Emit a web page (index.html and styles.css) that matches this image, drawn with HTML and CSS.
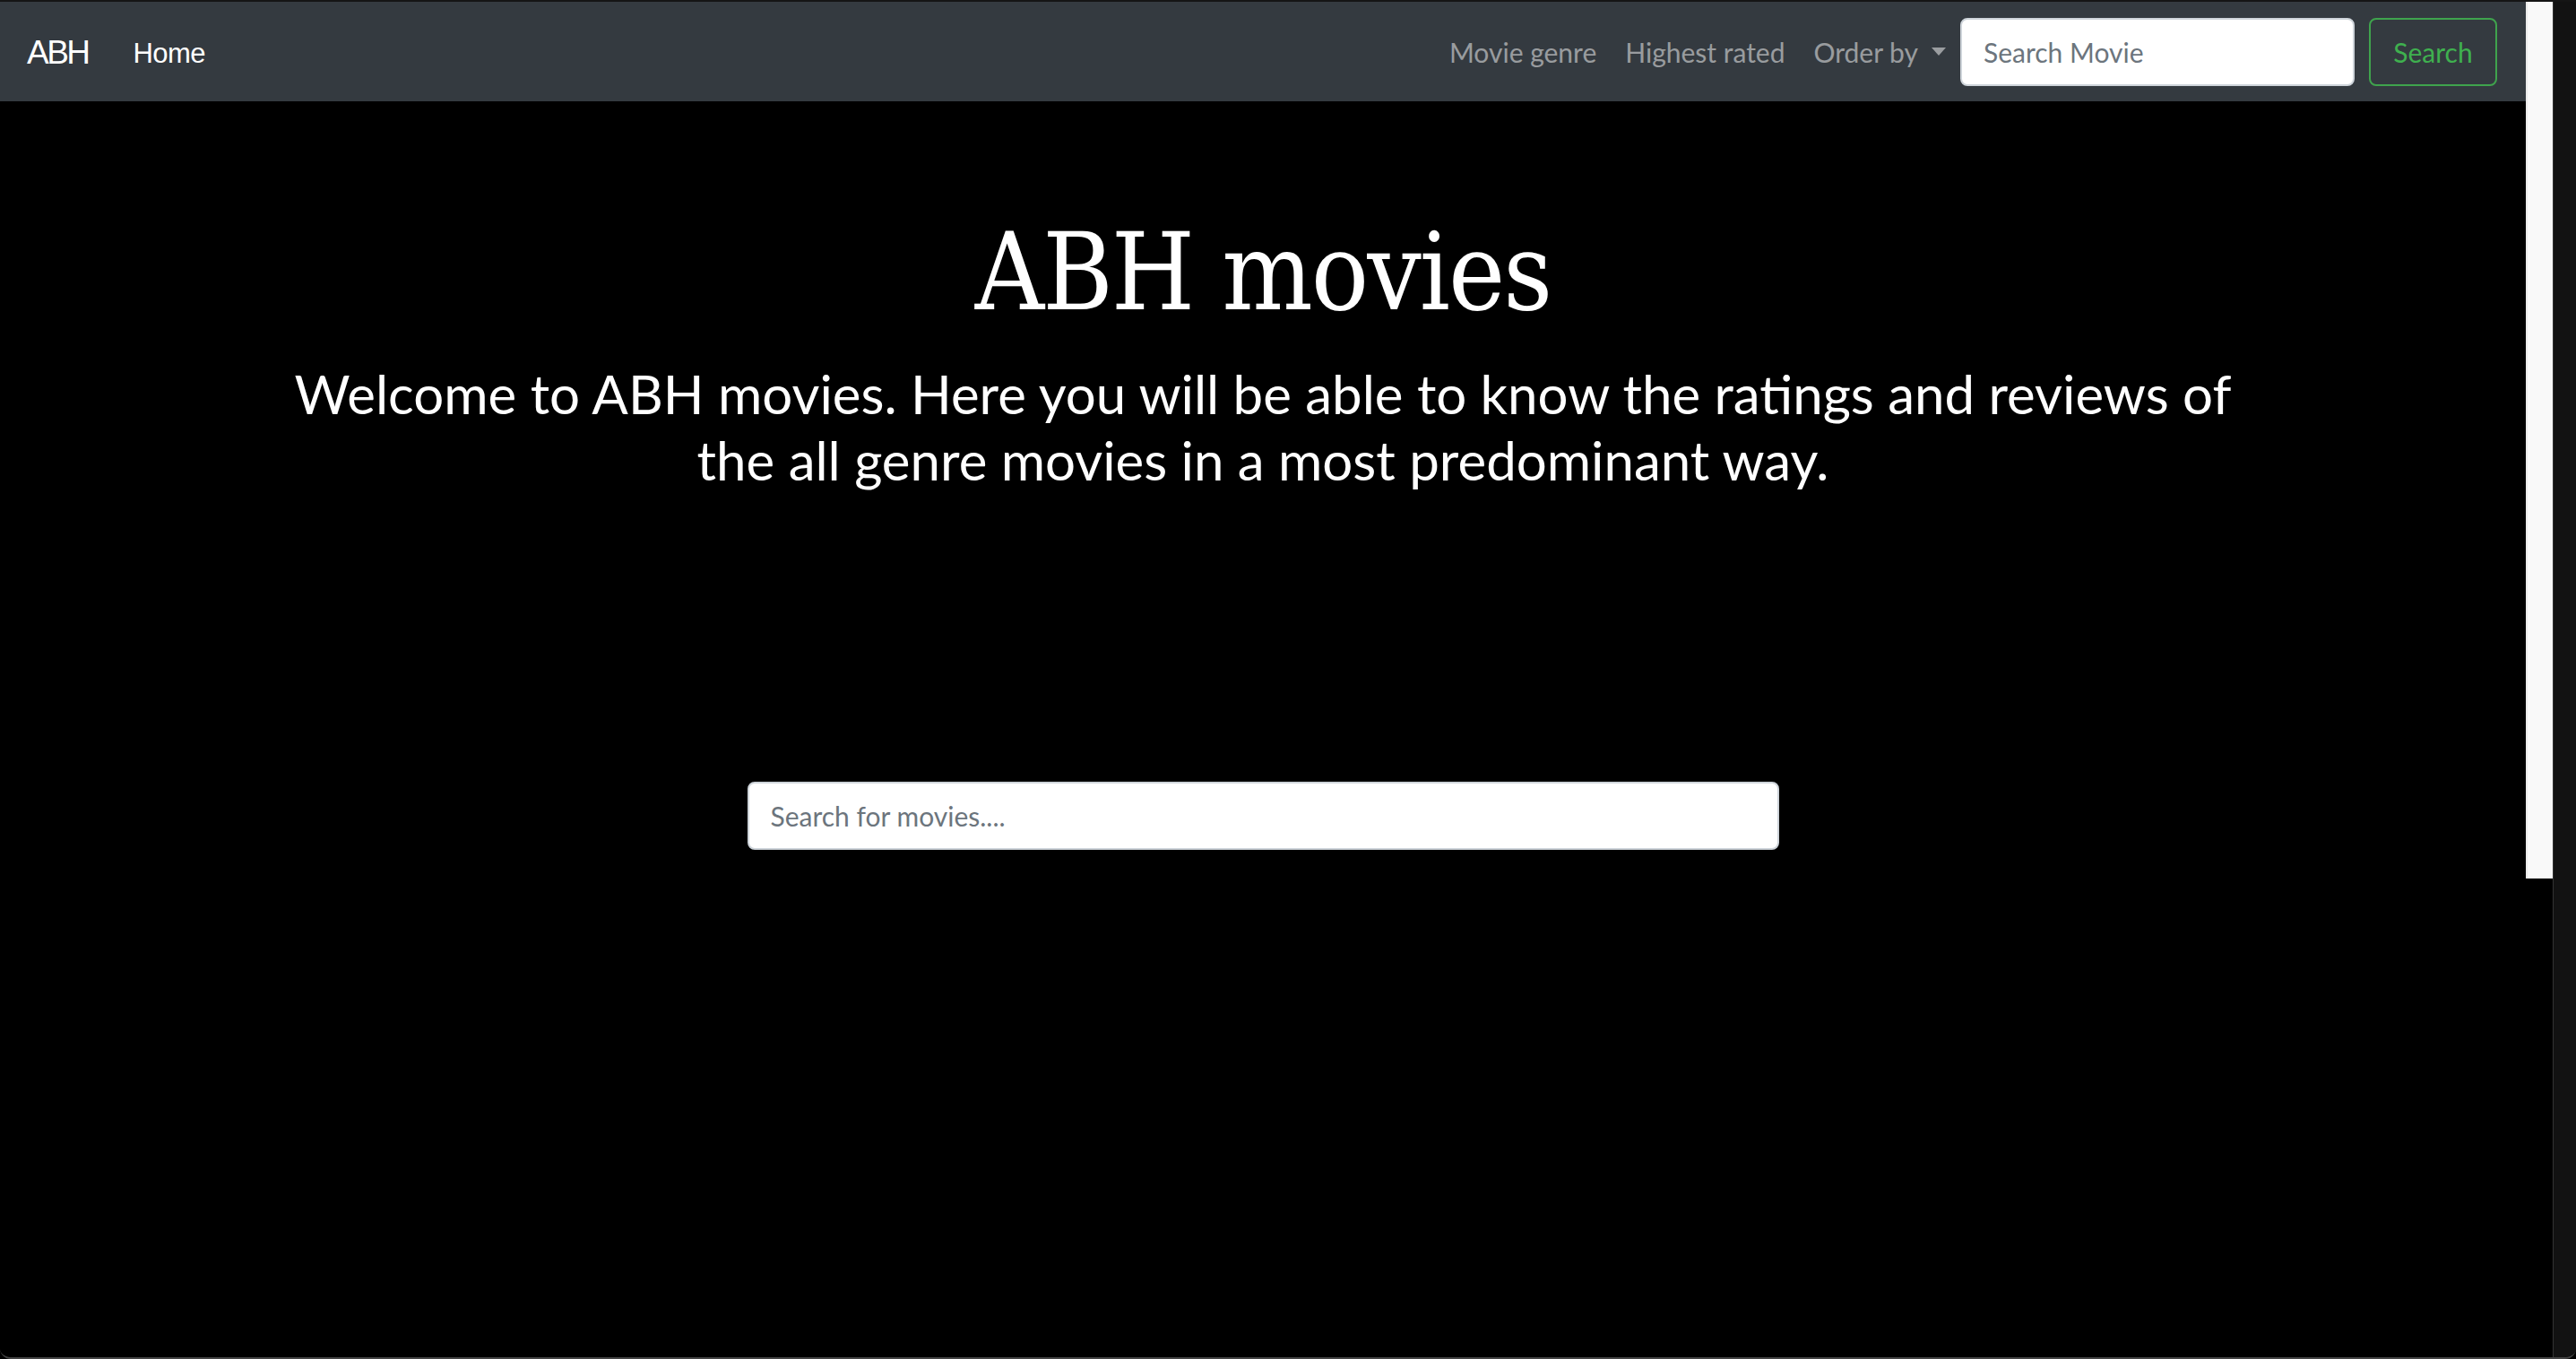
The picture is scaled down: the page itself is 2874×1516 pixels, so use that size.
FILE: index.html
```html
<!DOCTYPE html>
<html lang="en">
<head>
<meta charset="utf-8">
<title>ABH movies</title>
<link rel="stylesheet" href="styles.css">
</head>
<body>
<div class="window">
  <div class="page">
    <nav class="navbar">
      <a class="brand" href="#">ABH</a>
      <a class="nav-link active" href="#">Home</a>
      <div class="nav-right">
        <a class="nav-link" href="#">Movie genre</a>
        <a class="nav-link" href="#">Highest rated</a>
        <a class="nav-link dropdown" href="#">Order by<span class="caret"></span></a>
        <form class="nav-form">
          <input class="nav-input" type="search" placeholder="Search Movie">
          <button class="btn-search" type="button">Search</button>
        </form>
      </div>
    </nav>
    <main class="hero">
      <h1 class="title">ABH movies</h1>
      <p class="lead">Welcome to ABH movies. Here you will be able to know the ratings and reviews of<br>the all genre movies in a most predominant way.</p>
      <input class="main-search" type="text" placeholder="Search for movies....">
    </main>
  </div>
  <div class="scrollbar"><div class="thumb"></div></div>
  <div class="edge"></div>
</div>
</body>
</html>
```

FILE: styles.css
```css
html, body {
  margin: 0;
  padding: 0;
  background: #000;
  height: 1516px;
  overflow: hidden;
}

.window {
  display: flex;
  height: 1516px;
  border-top: 2px solid #151515;
  border-bottom: 2px solid #444;
  border-radius: 0 0 12px 12px;
  overflow: hidden;
  box-sizing: border-box;
}

.page {
  flex: 1;
  display: flex;
  flex-direction: column;
  background: #000;
}

.navbar {
  height: 111px;
  flex: none;
  box-sizing: border-box;
  background: #343a40;
  display: flex;
  align-items: center;
  padding: 0 32px 0 30px;
}

.brand {
  font-family: "Liberation Sans", Arial, sans-serif;
  font-size: 37px;
  letter-spacing: -2.5px;
  color: #fff;
  text-decoration: none;
  margin-right: 34px;
  line-height: 1;
  padding-top: 2px;
}

.nav-link {
  font-family: "Lato", sans-serif;
  font-size: 30px;
  color: rgba(255, 255, 255, 0.5);
  text-decoration: none;
  padding: 0 16px;
  line-height: 1;
  display: flex;
  align-items: center;
}

.nav-link.active {
  font-family: "Liberation Sans", Arial, sans-serif;
  font-size: 31px;
  letter-spacing: -0.6px;
  color: #fff;
  padding-top: 3px;
}

.nav-right {
  margin-left: auto;
  display: flex;
  align-items: center;
}

.caret {
  display: inline-block;
  width: 0;
  height: 0;
  margin-left: 15px;
  border-left: 8.5px solid transparent;
  border-right: 8.5px solid transparent;
  border-top: 9.5px solid rgba(255, 255, 255, 0.5);
}

.nav-form {
  display: flex;
  align-items: center;
}

.nav-input {
  width: 440px;
  height: 76px;
  box-sizing: border-box;
  border: 2px solid #ced4da;
  border-radius: 8px;
  background: #fff;
  padding: 0 24px;
  font-family: "Lato", sans-serif;
  font-size: 30px;
  color: #495057;
  outline: none;
}

.nav-input::placeholder,
.main-search::placeholder {
  color: #6c757d;
  opacity: 1;
}

.btn-search {
  margin-left: 16px;
  width: 143px;
  height: 76px;
  box-sizing: border-box;
  border: 2px solid #3fa34d;
  border-radius: 8px;
  background: transparent;
  color: #3fb04f;
  font-family: "Lato", sans-serif;
  font-size: 30px;
  padding: 0;
}

.hero {
  display: flex;
  flex-direction: column;
  align-items: center;
  padding-top: 118px;
  color: #fff;
}

.title {
  margin: 0;
  font-family: "DejaVu Serif", serif;
  font-stretch: condensed;
  font-weight: normal;
  font-size: 119px;
  line-height: 146px;
  letter-spacing: -2px;
}

.lead {
  margin: 25px 0 0;
  text-align: center;
  font-family: "Lato", sans-serif;
  font-size: 60px;
  line-height: 74px;
}

.main-search {
  margin-top: 322px;
  width: 1151px;
  height: 76px;
  box-sizing: border-box;
  border: 2px solid #ced4da;
  border-radius: 8px;
  background: #fff;
  padding: 0 24px;
  font-family: "Lato", sans-serif;
  font-size: 30px;
  outline: none;
}

.scrollbar {
  width: 30px;
  flex: none;
  background: #000;
}

.thumb {
  height: 978px;
  background: #f9f9f9;
  border-left: 2px solid #ebebeb;
  box-sizing: border-box;
}

.edge {
  width: 26px;
  flex: none;
  background: #121212;
  border-left: 1px solid #333;
  box-sizing: border-box;
}
```
